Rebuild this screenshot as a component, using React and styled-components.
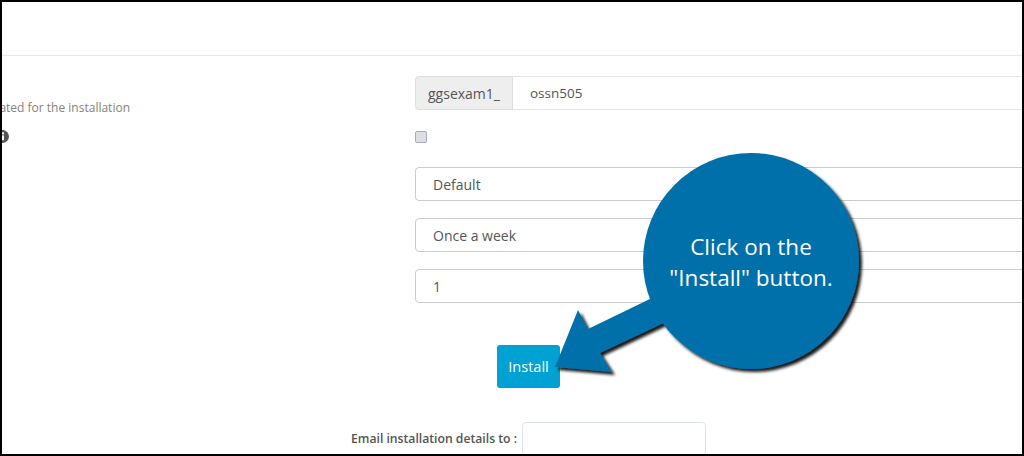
import styled, { createGlobalStyle } from 'styled-components';

const GlobalStyle = createGlobalStyle`
  html, body {
    margin: 0;
    height: 456px;
    overflow: hidden;
    background: #fff;
  }
`;

function App() {
  return (
    <>
      <GlobalStyle />
      <Frame>
        <Header />
        <Form>
          <Row $height={34} $mb={21}>
            <LabelCell>
              <Hint>ated for the installation</Hint>
            </LabelCell>
            <InputGroup>
              <Addon>ggsexam1_</Addon>
              <GroupInput>ossn505</GroupInput>
            </InputGroup>
          </Row>
          <Row $height={12} $mb={24}>
            <LabelCell>
              <InfoIcon viewBox="0 0 13 13">
                <circle cx="6.5" cy="6.5" r="6.5" fill="#555" />
                <rect x="5.4" y="5.4" width="2.6" height="4.8" fill="#fff" />
                <rect x="5.4" y="2.4" width="2.6" height="2" fill="#fff" />
              </InfoIcon>
            </LabelCell>
            <Checkbox />
          </Row>
          <Row $height={34} $mb={17}>
            <LabelCell />
            <Field>Default</Field>
          </Row>
          <Row $height={34} $mb={17}>
            <LabelCell />
            <Field>Once a week</Field>
          </Row>
          <Row $height={34} $mb={0}>
            <LabelCell />
            <Field>1</Field>
          </Row>
          <ButtonRow>
            <InstallButton>Install</InstallButton>
          </ButtonRow>
          <EmailRow>
            <EmailLabel>Email installation details to :</EmailLabel>
            <EmailInput />
          </EmailRow>
        </Form>
        <Callout>
          <svg width="340" height="240" viewBox="0 0 340 240">
            <defs>
              <filter id="callout-shadow" x="-10%" y="-10%" width="120%" height="120%">
                <feDropShadow dx="3" dy="3" stdDeviation="1.6" floodColor="#000" floodOpacity="0.9" />
              </filter>
            </defs>
            <g filter="url(#callout-shadow)" fill="#0070aa">
              <circle cx="211" cy="109" r="108" />
              <polygon points="15,215 38,158 48,177 112,146 130,168 60,201 72,220" />
            </g>
          </svg>
          <CalloutText>
            Click on the
            <br />
            "Install" button.
          </CalloutText>
        </Callout>
      </Frame>
    </>
  );
}

const Frame = styled.div`
  position: relative;
  box-sizing: border-box;
  width: 1024px;
  height: 456px;
  border: 2px solid #000;
  overflow: hidden;
  background: #fff;
  font-family: "Open Sans", "Liberation Sans", sans-serif;
  color: #555;
`;

const Header = styled.div`
  height: 53px;
  border-bottom: 1px solid #e8e8e8;
`;

const Form = styled.div`
  display: flex;
  flex-direction: column;
  padding-top: 20px;
`;

const Row = styled.div`
  display: flex;
  align-items: flex-start;
  height: ${(p) => p.$height}px;
  margin-bottom: ${(p) => p.$mb}px;
`;

const LabelCell = styled.div`
  flex: 0 0 413px;
  height: 100%;
  display: flex;
  align-items: flex-end;
`;

const Hint = styled.div`
  width: 128px;
  display: flex;
  justify-content: flex-end;
  white-space: nowrap;
  font-size: 12px;
  line-height: 16px;
  color: #8a8178;
  margin-bottom: -6px;
`;

const InfoIcon = styled.svg`
  width: 13px;
  height: 13px;
  flex: 0 0 13px;
  margin-left: -6px;
`;

const InputGroup = styled.div`
  flex: 0 0 700px;
  height: 34px;
  display: flex;
  font-size: 14px;
`;

const Addon = styled.div`
  flex: 0 0 98px;
  box-sizing: border-box;
  display: flex;
  align-items: center;
  justify-content: center;
  background: #eee;
  border: 1px solid #ddd;
  border-radius: 4px 0 0 4px;
  color: #555;
`;

const GroupInput = styled.div`
  flex: 1;
  box-sizing: border-box;
  display: flex;
  align-items: center;
  padding-left: 17px;
  border: 1px solid #e6e6e6;
  border-left: 0;
  font-size: 13.5px;
`;

const Checkbox = styled.div`
  box-sizing: border-box;
  width: 12px;
  height: 12px;
  border: 1px solid #aab;
  border-radius: 2px;
  background: #dcdee3;
`;

const Field = styled.div`
  flex: 0 0 700px;
  box-sizing: border-box;
  height: 34px;
  display: flex;
  align-items: center;
  padding-left: 17px;
  border: 1px solid #ccc;
  border-radius: 4px;
  font-size: 14px;
  color: #555;
`;

const ButtonRow = styled.div`
  margin-top: 42px;
  padding-left: 495px;
`;

const InstallButton = styled.div`
  width: 63px;
  height: 43px;
  display: flex;
  align-items: center;
  justify-content: center;
  background: #00a2d4;
  border-radius: 3px;
  color: #fff;
  font-size: 14.5px;
`;

const EmailRow = styled.div`
  display: flex;
  align-items: flex-start;
  margin-top: 34px;
  padding-left: 349px;
  gap: 3px;
`;

const EmailLabel = styled.div`
  width: 168px;
  white-space: nowrap;
  font-size: 12.2px;
  font-weight: 600;
  line-height: 34px;
  color: #555;
`;

const EmailInput = styled.div`
  box-sizing: border-box;
  width: 184px;
  height: 34px;
  border: 1px solid #dde4ea;
  border-radius: 4px;
`;

const Callout = styled.div`
  position: absolute;
  left: 538px;
  top: 150px;
  width: 340px;
  height: 240px;
`;

const CalloutText = styled.div`
  position: absolute;
  left: 111px;
  top: 79px;
  width: 200px;
  text-align: center;
  color: #fff;
  font-size: 22.5px;
  line-height: 31px;
`;

export default App;
